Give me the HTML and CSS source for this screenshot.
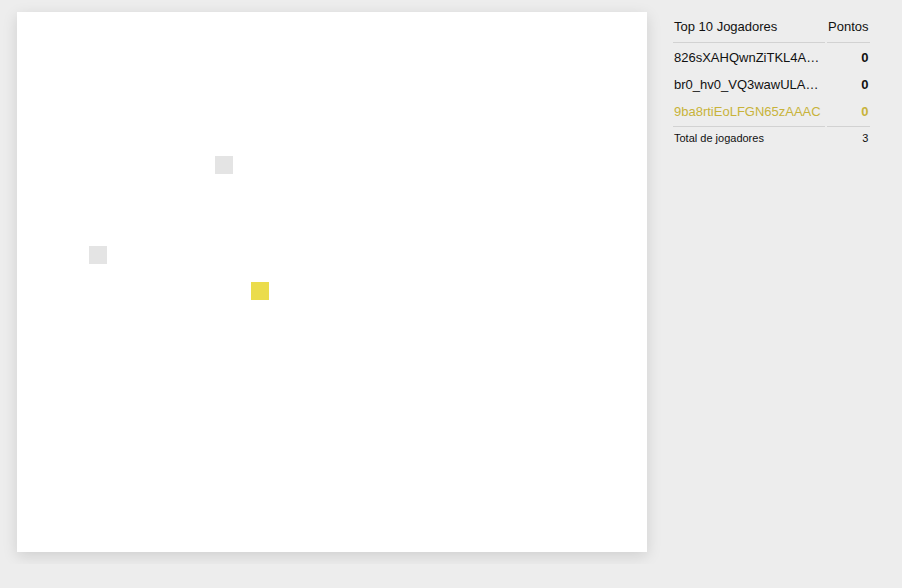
FILE: index.html
```html
<!DOCTYPE html>
<html lang="pt">
<head>
<meta charset="utf-8">
<title>Jogo</title>
<link rel="stylesheet" href="styles.css">
</head>
<body>
<div class="app">
  <div class="board">
    <div class="cell other" style="grid-column: 12; grid-row: 9;"></div>
    <div class="cell other" style="grid-column: 5; grid-row: 14;"></div>
    <div class="cell me" style="grid-column: 14; grid-row: 16;"></div>
  </div>
  <table class="score">
    <thead>
      <tr><th class="name">Top 10 Jogadores</th><th class="pts">Pontos</th></tr>
    </thead>
    <tbody>
      <tr><td class="name">826sXAHQwnZiTKL4AAAB</td><td class="pts">0</td></tr>
      <tr><td class="name">br0_hv0_VQ3wawULAAAA</td><td class="pts">0</td></tr>
      <tr class="current"><td class="name">9ba8rtiEoLFGN65zAAAC</td><td class="pts">0</td></tr>
    </tbody>
    <tfoot>
      <tr><td class="name">Total de jogadores</td><td class="pts">3</td></tr>
    </tfoot>
  </table>
</div>
</body>
</html>
```
FILE: styles.css
```css
html, body {
  margin: 0;
  padding: 0;
  background: #ededed;
  font-family: "Liberation Sans", Arial, sans-serif;
  color: #111;
}
.app {
  display: flex;
  align-items: flex-start;
  padding: 12px 17px;
  gap: 24px;
}
.board {
  width: 630px;
  height: 540px;
  flex: none;
  background: #fff;
  box-shadow: 0 4px 14px rgba(0, 0, 0, 0.13);
  display: grid;
  grid-template-columns: repeat(35, 18px);
  grid-template-rows: repeat(30, 18px);
}
.cell { width: 18px; height: 18px; }
.cell.other { background: #e4e4e4; }
.cell.me { background: #ebdc4c; }

.score {
  border-collapse: separate;
  border-spacing: 2px;
  font-size: 13px;
  line-height: 15px;
}
.score th, .score td {
  padding: 0 1px;
  white-space: nowrap;
}
.score .name {
  width: 150px;
  max-width: 150px;
  overflow: hidden;
  text-overflow: ellipsis;
  text-align: left;
}
.score .pts {
  width: 40px;
  padding-right: 2px;
  text-align: right;
}
.score th {
  font-weight: normal;
  padding-top: 5px;
  padding-bottom: 8px;
  border-bottom: 1px solid #d2d2d2;
}
.score tbody td {
  height: 15px;
  padding-top: 5px;
  padding-bottom: 5px;
}
.score tbody td.pts { font-weight: bold; }
.score tbody tr.current td { color: #c8b33a; }
.score tfoot td {
  font-size: 11px;
  line-height: 13px;
  padding-top: 5px;
  border-top: 1px solid #d2d2d2;
}
```
